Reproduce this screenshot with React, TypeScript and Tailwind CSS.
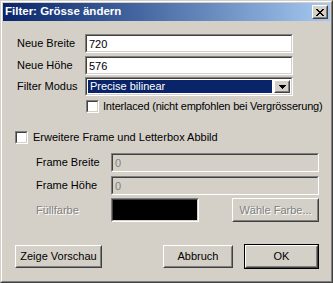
import React from 'react';

// Win classic 3D frames
const Sunken: React.FC<{ className?: string; inner?: string; children?: React.ReactNode }> = ({ className = '', inner = 'bg-white', children }) => (
  <div className={`border border-t-[#808080] border-l-[#808080] border-b-white border-r-white ${className}`}>
    <div className={`h-full border border-t-[#404040] border-l-[#404040] border-b-[#d4d0c8] border-r-[#d4d0c8] ${inner}`}>
      {children}
    </div>
  </div>
);

const Raised: React.FC<{ className?: string; children?: React.ReactNode }> = ({ className = '', children }) => (
  <div className={`border border-t-white border-l-white border-b-[#404040] border-r-[#404040] bg-[#d4d0c8] ${className}`}>
    <div className="h-full border border-t-[#d4d0c8] border-l-[#d4d0c8] border-b-[#808080] border-r-[#808080] flex items-center justify-center">
      {children}
    </div>
  </div>
);

const Checkbox = () => <Sunken className="w-[13px] h-[13px] shrink-0" />;

const disabledText = 'text-[#808080] [text-shadow:1px_1px_0_#ffffff]';

export default function App() {
  return (
    <div className="w-[333px] h-[283px] bg-[#d4d0c8] border border-t-[#d4d0c8] border-l-[#d4d0c8] border-b-[#404040] border-r-[#404040] font-['Liberation_Sans',Arial,sans-serif] text-[11px] text-black leading-none whitespace-nowrap">
      <div className="h-full border border-t-white border-l-white border-b-[#808080] border-r-[#808080] p-px flex flex-col">
        {/* Title bar */}
        <div className="h-[18px] shrink-0 bg-linear-to-r from-[#0a246a] to-[#a6caf0] flex items-center justify-between pl-[2px] pr-[2px]">
          <span className="text-white font-bold text-[11.5px]">Filter: Grösse ändern</span>
          <Raised className="w-[16px] h-[14px]">
            <svg width="8" height="7" viewBox="0 0 8 7" shapeRendering="crispEdges">
              <path d="M0 0h2v1H0zM6 0h2v1H6zM1 1h2v1H1zM5 1h2v1H5zM2 2h4v1H2zM3 3h2v1H3zM2 4h4v1H2zM1 5h2v1H1zM5 5h2v1H5zM0 6h2v1H0zM6 6h2v1H6z" fill="#000" />
            </svg>
          </Raised>
        </div>

        {/* Size fields */}
        <div className="mt-[13px] pl-[14px] flex items-center">
          <span className="w-[68px]">Neue Breite</span>
          <Sunken className="w-[208px] h-[19px]">
            <div className="pl-[2px] pt-[3px]">720</div>
          </Sunken>
        </div>
        <div className="mt-[3px] pl-[14px] flex items-center">
          <span className="w-[68px]">Neue Höhe</span>
          <Sunken className="w-[208px] h-[19px]">
            <div className="pl-[2px] pt-[3px]">576</div>
          </Sunken>
        </div>
        <div className="mt-[2px] pl-[14px] flex items-center">
          <span className="w-[68px]">Filter Modus</span>
          <Sunken className="w-[208px] h-[19px]">
            <div className="h-full flex items-center p-px">
              <div className="flex-1 h-full bg-[#0a246a] text-white pl-[2px] flex items-center">Precise bilinear</div>
              <Raised className="w-[16px] h-full ml-[2px]">
                <svg width="7" height="4" viewBox="0 0 7 4" shapeRendering="crispEdges">
                  <path d="M0 0h7v1H0zM1 1h5v1H1zM2 2h3v1H2zM3 3h1v1H3z" fill="#000" />
                </svg>
              </Raised>
            </div>
          </Sunken>
        </div>
        <div className="mt-[4px] pl-[83px] flex items-center gap-[4px] h-[13px]">
          <Checkbox />
          <span className="tracking-[-0.2px]">Interlaced (nicht empfohlen bei Vergrösserung)</span>
        </div>

        {/* Letterbox */}
        <div className="mt-[18px] pl-[12px] flex items-center gap-[5px] h-[13px]">
          <Checkbox />
          <span>Erweitere Frame und Letterbox Abbild</span>
        </div>
        <div className="mt-[9px] pl-[33px] flex items-center">
          <span className="w-[75px]">Frame Breite</span>
          <Sunken className="w-[208px] h-[19px]" inner="bg-[#d4d0c8]">
            <div className="pl-[2px] pt-[3px] text-[#808080]">0</div>
          </Sunken>
        </div>
        <div className="mt-[4px] pl-[33px] flex items-center">
          <span className="w-[75px]">Frame Höhe</span>
          <Sunken className="w-[208px] h-[19px]" inner="bg-[#d4d0c8]">
            <div className="pl-[2px] pt-[3px] text-[#808080]">0</div>
          </Sunken>
        </div>
        <div className="mt-[3px] pl-[33px] flex items-center h-[24px]">
          <span className={`w-[75px] ${disabledText}`}>Füllfarbe</span>
          <Sunken className="w-[88px] h-[24px]" inner="bg-black" />
          <Raised className="w-[87px] h-[24px] ml-[33px]">
            <span className={disabledText}>Wähle Farbe...</span>
          </Raised>
        </div>

        {/* Buttons */}
        <div className="mt-[22px] pl-[12px] flex items-center h-[25px]">
          <Raised className="w-[87px] h-[23px]">Zeige Vorschau</Raised>
          <Raised className="w-[70px] h-[23px] ml-[61px]">Abbruch</Raised>
          <div className="w-[75px] h-[25px] ml-[11px] border border-black">
            <Raised className="w-full h-full">OK</Raised>
          </div>
        </div>
      </div>
    </div>
  );
}
